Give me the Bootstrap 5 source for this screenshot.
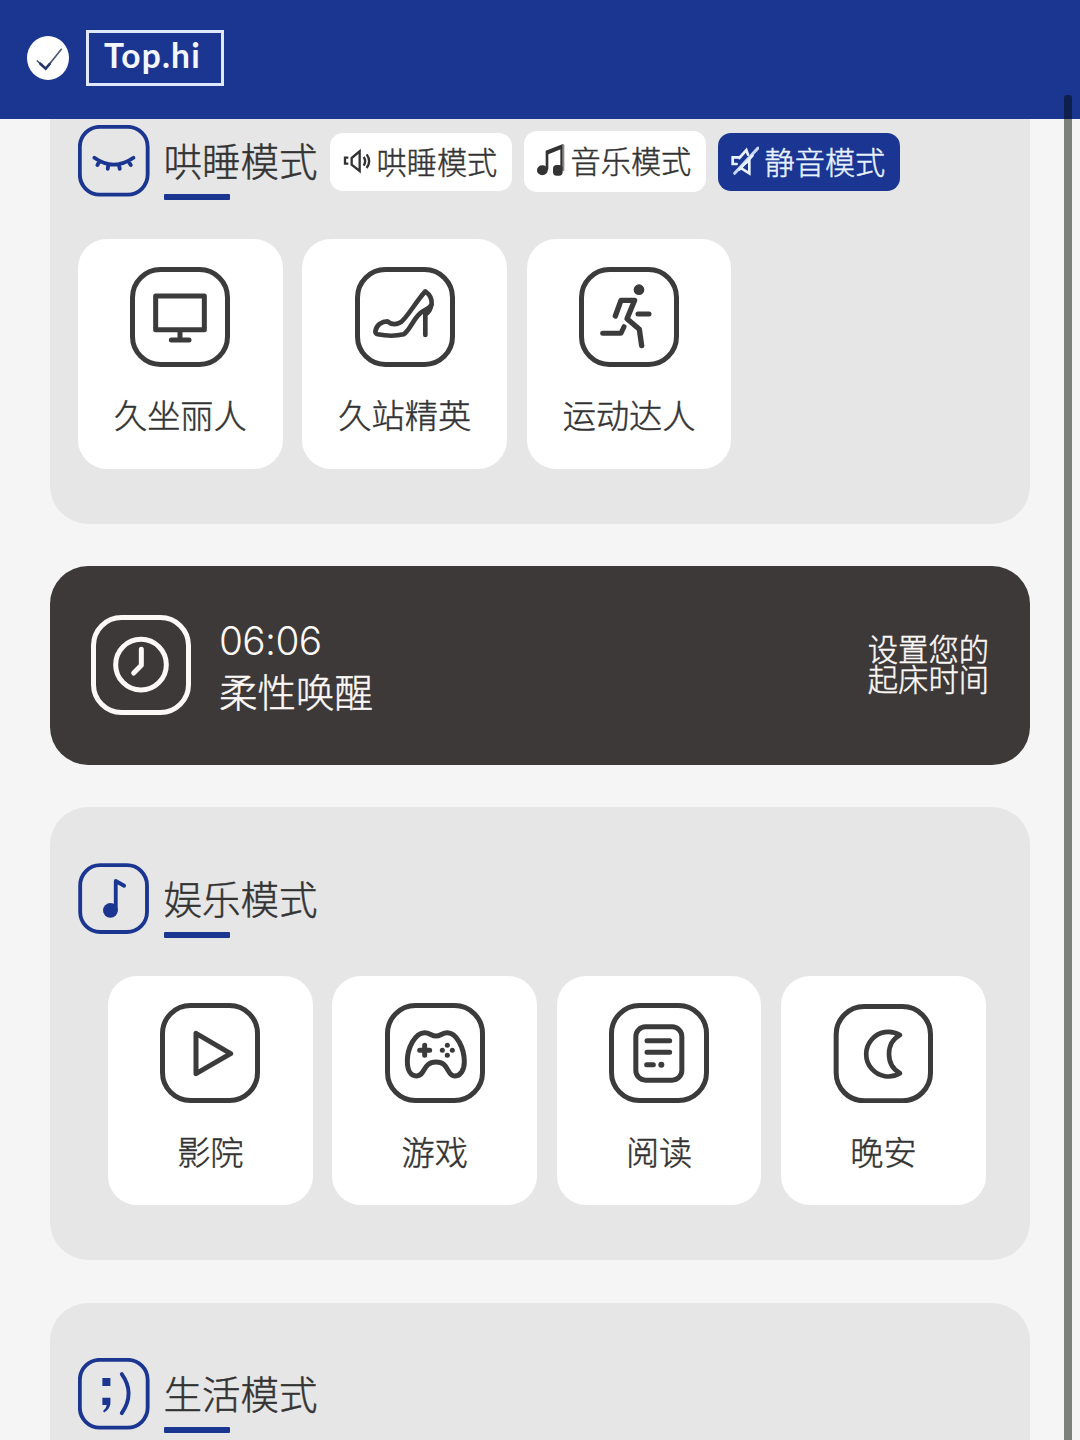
<!DOCTYPE html>
<html lang="zh-CN">
<head>
<meta charset="utf-8">
<meta name="viewport" content="width=device-width, initial-scale=1">
<title>Top.hi</title>
<link rel="stylesheet" href="https://cdn.jsdelivr.net/npm/bootstrap@5.3.0/dist/css/bootstrap.min.css">
<style>
  :root { --brand: #1b3691; --ink: #3b3b3b; }
  body { background: #f5f5f5; color: #333; font-family: "Noto Sans CJK SC", sans-serif; font-weight: 300; -webkit-text-stroke: .45px currentColor; height: 1440px; overflow: hidden; position: relative; }
  svg { display: block; flex: none; fill: none; stroke: currentColor; stroke-linecap: round; stroke-linejoin: round; }
  .solid { fill: currentColor; stroke: none; }
  .topbar { background: var(--brand); height: 119px; padding: 0 0 3px 27px; }
  .brand-box { margin-left: 17px; width: 138px; height: 56px; border: 3px solid #dfe8ff; color: #f4f7ff; font: 700 33.5px/45px Lato, sans-serif; padding-left: 15px; letter-spacing: 1.2px; -webkit-text-stroke: 0; }
  .page { padding: 0 50px; }
  .panel { background: #e6e6e6; border-radius: 38px; padding: 56px 28px 55px; margin-bottom: 43px; }
  .panel-first { border-radius: 0 0 38px 38px; padding-top: 6px; margin-bottom: 42px; }
  .panel-first .panel-head { margin-bottom: 42px; }
  .panel-last { border-radius: 38px 38px 0 0; padding-top: 55px; padding-bottom: 10px; margin-bottom: 0; }
  .panel-last .panel-head { margin-bottom: 0; }
  .panel-head { height: 72px; margin-bottom: 41px; }
  .head-icon { color: var(--brand); width: 71.5px; height: 71.5px; stroke-width: 11.5; }
  .head-title { font-size: 38.5px; line-height: 52px; margin: 8px 0 0 14px; white-space: nowrap; }
  .head-title::after { content: ""; display: block; width: 66.5px; height: 6px; border-radius: 1px; background: var(--brand); margin-top: 9px; }
  .pills { gap: 11.5px; margin: 6px 0 0 12px; }
  .pill { background: #fff; height: 61px; width: 182.5px; border-radius: 13px; padding: 0 0 3px 13px; gap: 6px; font-size: 30.2px; line-height: 44px; white-space: nowrap; }
  .pill-short { height: 58px; margin: 2px 0 1px; }
  .pill.on { background: #1a3592; color: #e8f2ff; }
  .tiles { gap: 19.7px; }
  .tiles-inset { padding-left: 30px; }
  .tile { background: #fff; border-radius: 29px; width: 204.7px; height: 229.5px; padding-top: 27.5px; }
  .tile svg, .wake svg { width: 100px; height: 100px; stroke-width: 15; }
  .tile svg { color: var(--ink); }
  .tile-name { font-size: 33.2px; line-height: 48px; margin-top: 23.5px; }
  .wake { background: #3e3939; color: #fbf8f6; height: 199px; border-radius: 38px; padding: 0 41px; margin-bottom: 42px; }
  .wake-time { font: 300 38.8px/46px Inter, sans-serif; letter-spacing: -.6px; padding-top: 4px; -webkit-text-stroke: 0; }
  .wake-name { font-size: 38.5px; line-height: 52px; }
  .wake-hint { font-size: 30.3px; line-height: 30.5px; padding-bottom: 4px; }
  .scroll-thumb { position: absolute; right: 8.5px; top: 95px; bottom: 0; width: 8px; border-radius: 3px 3px 0 0; background: rgba(0,8,0,.49); }
</style>
</head>
<body>
<header class="topbar d-flex align-items-center">
  <svg width="42" height="44" viewBox="82 109 126 132"><ellipse class="solid" cx="145" cy="175" rx="63" ry="66" style="color:#fff"/><path d="M113 184 138 207 185 149" stroke="#4a577c" stroke-width="5" stroke-linejoin="miter"/><path d="M122 192 138 207 150 193" stroke="#26376b" stroke-width="8" stroke-linejoin="miter"/></svg>
  <div class="brand-box">Top.hi</div>
</header>

<main class="page">
  <section class="panel panel-first">
    <div class="panel-head d-flex align-items-start">
      <svg class="head-icon" viewBox="235 375 214 214"><rect x="240.500" y="380.500" width="203" height="203" rx="60"/><path d="M284 473Q342 514 401 473M299 484 293 495M326 492 324 506M357 492 360 506M386 484 393 495"/></svg>
      <div class="head-title">哄睡模式</div>
      <div class="pills d-flex">
        <div class="pill pill-short d-flex align-items-center">
          <svg width="28" height="28" viewBox="67 112 84 84" stroke-width="7"><path d="M83 144H73V162H83M93 145 117 125V184L93 165ZM129 142Q138 155 129 168M138 134Q153 155 138 175" stroke-linecap="butt" stroke-linejoin="miter"/></svg>
          <span>哄睡模式</span>
        </div>
        <div class="pill d-flex align-items-center">
          <svg width="28" height="34" viewBox="651 106 84 102"><path d="M681 184V132L725 115V184" stroke-width="8" stroke-linejoin="miter"/><path d="M730 113V188" stroke-width="6" stroke="#888"/><path d="M682 137 723 121" stroke-width="7"/><ellipse class="solid" cx="667" cy="188" rx="16" ry="15"/><rect class="solid" x="699" y="172" width="29" height="32" rx="11"/></svg>
          <span>音乐模式</span>
        </div>
        <div class="pill pill-short on d-flex align-items-center">
          <svg width="28" height="30" viewBox="362 109 84 90"><path d="M383 143H367V163H379M387 145 408 121 413 135M406 160 417 153V191L393 176" stroke-width="8" stroke-linejoin="miter"/><path d="M373 191 443 115" stroke-width="9" stroke="#c9d6f5"/><path d="M387 180 427 138" stroke-width="7"/></svg>
          <span>静音模式</span>
        </div>
      </div>
    </div>
    <div class="tiles d-flex">
      <div class="tile d-flex flex-column align-items-center">
        <svg viewBox="180 112 300 300"><rect x="187.500" y="119.500" width="285" height="285" rx="84"/><path d="M257 199H403V300H257ZM330 302V328M304 331H357"/></svg>
        <div class="tile-name">久坐丽人</div>
      </div>
      <div class="tile d-flex flex-column align-items-center">
        <svg viewBox="43 50 300 300"><rect x="50.500" y="57.500" width="285" height="285" rx="84"/><path d="M104 243C107 224 124 213 140 213C151 222 166 224 180 216C202 199 223 157 254 123C268 133 275 146 273 163C265 176 249 179 237 190C215 211 208 239 189 252C168 257 136 257 111 252Q104 250 104 243ZM272 162Q270 182 256 191M254 188V254" stroke-width="14"/></svg>
        <div class="tile-name">久站精英</div>
      </div>
      <div class="tile d-flex flex-column align-items-center">
        <svg viewBox="716 50 300 300"><rect x="723.500" y="57.500" width="285" height="285" rx="84"/><circle class="solid" cx="896" cy="118" r="16"/><path d="M825 197 842 150H883L860 205 897 237 904 286" stroke-width="16"/><path d="M787 249H842L851 229M893 191H926"/></svg>
        <div class="tile-name">运动达人</div>
      </div>
    </div>
  </section>

  <section class="wake d-flex align-items-center">
    <svg viewBox="153 167 300 300"><rect x="160.500" y="174.500" width="285" height="285" rx="84"/><circle cx="303" cy="316" r="76"/><path d="M304 270V318L281 341"/></svg>
    <div class="ms-4 ps-1">
      <div class="wake-time">06:06</div>
      <div class="wake-name">柔性唤醒</div>
    </div>
    <div class="wake-hint ms-auto">设置您的<br>起床时间</div>
  </section>

  <section class="panel">
    <div class="panel-head d-flex align-items-start">
      <svg class="head-icon" viewBox="84 68 214 214"><rect x="90.500" y="74.500" width="200" height="200" rx="60"/><circle class="solid" cx="181" cy="210" r="22"/><path d="M197 210V122L222 136"/></svg>
      <div class="head-title">娱乐模式</div>
    </div>
    <div class="tiles tiles-inset d-flex">
      <div class="tile d-flex flex-column align-items-center">
        <svg viewBox="332 489 300 300"><rect x="339.500" y="496.500" width="285" height="285" rx="84"/><path d="M440 580 544 641 440 701Z"/></svg>
        <div class="tile-name">影院</div>
      </div>
      <div class="tile d-flex flex-column align-items-center">
        <svg viewBox="75 69 300 300"><rect x="82.500" y="76.500" width="285" height="285" rx="84"/><path d="M228 168C242 168 246 158 262 158C290 158 313 205 313 245C313 272 300 288 284 288C260 288 268 246 228 246C188 246 196 288 170 288C152 288 142 271 142 243C142 205 165 158 194 158C210 158 214 168 228 168ZM194 196V226M179 211H209"/><g class="solid"><circle cx="262" cy="196" r="7.500"/><circle cx="262" cy="226" r="7.500"/><circle cx="247" cy="211" r="7.500"/><circle cx="277" cy="211" r="7.500"/></g></svg>
        <div class="tile-name">游戏</div>
      </div>
      <div class="tile d-flex flex-column align-items-center">
        <svg viewBox="748 69 300 300"><rect x="755.500" y="76.500" width="285" height="285" rx="84"/><rect x="828.500" y="140.500" width="138" height="160" rx="29"/><path d="M862 182H930M862 217H930M861 254H881"/><circle class="solid" cx="905" cy="254" r="9"/></svg>
        <div class="tile-name">阅读</div>
      </div>
      <div class="tile d-flex flex-column align-items-center">
        <svg viewBox="221 98 300 300"><rect x="230.500" y="108.500" width="283" height="283" rx="84"/><path d="M422 194A67 67 0 1 0 422 309C378 284 378 218 422 194Z" stroke-width="14"/></svg>
        <div class="tile-name">晚安</div>
      </div>
    </div>
  </section>

  <section class="panel panel-last">
    <div class="panel-head d-flex align-items-start">
      <svg class="head-icon" viewBox="113 205 214 214"><rect x="118.500" y="210.500" width="203" height="203" rx="60"/><path class="solid" d="M186 265H210V289H186ZM186 324H210V342Q208 358 191 368L188 364Q198 356 199 346H186Z"/><path d="M244 253Q285 310 244 370"/></svg>
      <div class="head-title">生活模式</div>
    </div>
  </section>
</main>
<div class="scroll-thumb"></div>
<script src="https://cdn.jsdelivr.net/npm/bootstrap@5.3.0/dist/js/bootstrap.bundle.min.js"></script>
</body>
</html>
